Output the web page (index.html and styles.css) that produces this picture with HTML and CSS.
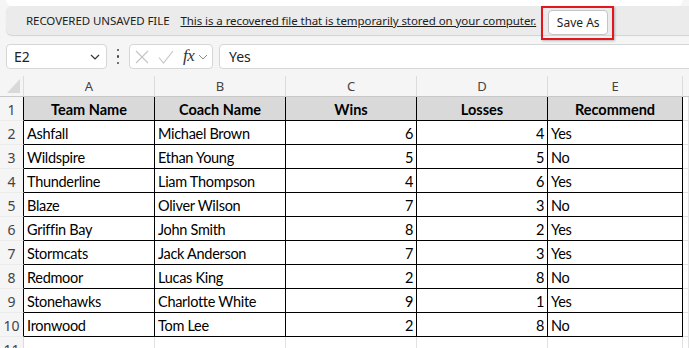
FILE: index.html
```html
<!DOCTYPE html>
<html lang="en">
<head>
<meta charset="utf-8">
<title>Recovered file</title>
<link rel="stylesheet" href="styles.css">
</head>
<body>
<div class="app">
  <div class="top-strip"></div>
  <div class="notice">
    <span class="notice-title">RECOVERED UNSAVED FILE</span>
    <a class="notice-link" href="#">This is a recovered file that is temporarily stored on your computer.</a>
    <span class="highlight"><button class="save-btn">Save As</button></span>
  </div>

  <div class="formula-row">
    <div class="name-box">
      <span>E2</span>
      <svg class="chev" width="10" height="6" viewBox="0 0 10 6"><path d="M1 1 L5 5 L9 1" fill="none" stroke="#333" stroke-width="1.2"/></svg>
    </div>
    <div class="more-dots"><i></i><i></i><i></i></div>
    <div class="fx-group">
      <svg class="ico-x" width="14" height="14" viewBox="0 0 14 14"><path d="M1 1 L13 13 M13 1 L1 13" stroke="#c4c4c4" stroke-width="1.1" fill="none"/></svg>
      <svg class="ico-check" width="16" height="14" viewBox="0 0 16 14"><path d="M1 7.5 L5.5 13 L15 1" stroke="#c4c4c4" stroke-width="1.1" fill="none"/></svg>
      <span class="fx">fx</span>
      <svg class="chev-sm" width="10" height="6" viewBox="0 0 10 6"><path d="M1 1 L5 5 L9 1" fill="none" stroke="#8a8a8a" stroke-width="1"/></svg>
    </div>
    <div class="formula-input">Yes</div>
  </div>

  <div class="sheet">
    <div class="corner"></div>
    <div class="colh">A</div><div class="colh">B</div><div class="colh">C</div><div class="colh">D</div><div class="colh">E</div><div class="colh last"></div>

    <div class="rowh">1</div>
    <div class="cell head">Team Name</div><div class="cell head">Coach Name</div><div class="cell head">Wins</div><div class="cell head">Losses</div><div class="cell head">Recommend</div><div class="blank"></div>

    <div class="rowh">2</div>
    <div class="cell">Ashfall</div><div class="cell">Michael Brown</div><div class="cell num">6</div><div class="cell num">4</div><div class="cell">Yes</div><div class="blank"></div>

    <div class="rowh">3</div>
    <div class="cell">Wildspire</div><div class="cell">Ethan Young</div><div class="cell num">5</div><div class="cell num">5</div><div class="cell">No</div><div class="blank"></div>

    <div class="rowh">4</div>
    <div class="cell">Thunderline</div><div class="cell">Liam Thompson</div><div class="cell num">4</div><div class="cell num">6</div><div class="cell">Yes</div><div class="blank"></div>

    <div class="rowh">5</div>
    <div class="cell">Blaze</div><div class="cell">Oliver Wilson</div><div class="cell num">7</div><div class="cell num">3</div><div class="cell">No</div><div class="blank"></div>

    <div class="rowh">6</div>
    <div class="cell">Griffin Bay</div><div class="cell">John Smith</div><div class="cell num">8</div><div class="cell num">2</div><div class="cell">Yes</div><div class="blank"></div>

    <div class="rowh">7</div>
    <div class="cell">Stormcats</div><div class="cell">Jack Anderson</div><div class="cell num">7</div><div class="cell num">3</div><div class="cell">Yes</div><div class="blank"></div>

    <div class="rowh">8</div>
    <div class="cell">Redmoor</div><div class="cell">Lucas King</div><div class="cell num">2</div><div class="cell num">8</div><div class="cell">No</div><div class="blank"></div>

    <div class="rowh">9</div>
    <div class="cell">Stonehawks</div><div class="cell">Charlotte White</div><div class="cell num">9</div><div class="cell num">1</div><div class="cell">Yes</div><div class="blank"></div>

    <div class="rowh">10</div>
    <div class="cell">Ironwood</div><div class="cell">Tom Lee</div><div class="cell num">2</div><div class="cell num">8</div><div class="cell">No</div><div class="blank"></div>

    <div class="rowh empty">11</div>
    <div class="blank"></div><div class="blank"></div><div class="blank"></div><div class="blank"></div><div class="blank"></div><div class="blank"></div>
  </div>
</div>
</body>
</html>
```

FILE: styles.css
```css
html, body {
  margin: 0;
  padding: 0;
  overflow: hidden;
  background: #f5f5f5;
}
.app {
  width: 689px;
  height: 348px;
  overflow: hidden;
  font-family: "Noto Sans", "Open Sans", sans-serif;
  color: #1f1f1f;
}
.top-strip {
  height: 6px;
  margin: 0 6px;
  background: #ffffff;
  border-radius: 0 0 6px 6px;
}
.notice {
  height: 29px;
  margin-left: 6px;
  margin-right: -12px;
  background: #ebebeb;
  border-radius: 6px 0 0 6px;
  box-shadow: 0 1px 1px rgba(0, 0, 0, 0.14);
  display: flex;
  align-items: center;
  padding-left: 20px;
  font-size: 11.5px;
  letter-spacing: -0.07px;
  box-sizing: border-box;
}
.notice-title {
  color: #1e1e1e;
  margin-right: 11px;
}
.notice-link {
  color: #1e1e1e;
  text-decoration: underline;
  margin-right: 5px;
}
.highlight {
  display: flex;
  border: 2px solid #e4161b;
  padding: 2px 4px 3px 5px;
  margin: 2px 0 -3px;
  box-shadow: 1px 1px 2px rgba(0, 0, 0, 0.25);
}
.save-btn {
  width: 60px;
  height: 25px;
  border: 1px solid #c4c4c4;
  border-radius: 4px;
  background: #ffffff;
  font-family: inherit;
  font-size: 12px;
  color: #1e1e1e;
  padding: 0;
}
.formula-row {
  display: flex;
  align-items: stretch;
  height: 25px;
  margin-top: 9px;
  padding-left: 6px;
  margin-right: -10px;
}
.name-box {
  width: 101px;
  box-sizing: border-box;
  background: #fff;
  border: 1px solid #d6d6d6;
  border-radius: 4px;
  display: flex;
  align-items: center;
  justify-content: space-between;
  padding: 0 6px 0 7px;
  font-size: 14px;
  color: #222;
}
.chev { margin-top: 1px; }
.more-dots {
  width: 22px;
  display: flex;
  flex-direction: column;
  align-items: center;
  justify-content: center;
  gap: 4px;
}
.more-dots i {
  display: block;
  width: 2.5px;
  height: 2.5px;
  border-radius: 1px;
  background: #444;
}
.fx-group {
  width: 84px;
  box-sizing: border-box;
  background: #fff;
  border: 1px solid #d6d6d6;
  border-radius: 4px;
  display: flex;
  align-items: center;
  padding-left: 5px;
}
.ico-x { margin-right: 9px; }
.ico-check { margin-right: 9px; }
.fx {
  font-family: "Liberation Serif", "DejaVu Serif", serif;
  font-style: italic;
  font-size: 17px;
  color: #333;
  margin-right: 4px;
  margin-top: -2px;
  letter-spacing: -0.5px;
}
.chev-sm { margin-top: 1px; }
.formula-input {
  flex: 1;
  margin-left: 6px;
  box-sizing: border-box;
  background: #fff;
  border: 1px solid #d6d6d6;
  border-radius: 4px 0 0 4px;
  display: flex;
  align-items: center;
  padding-left: 9px;
  font-size: 14px;
  color: #222;
}
.sheet {
  margin-top: 7px;
  display: grid;
  grid-template-columns: 24px 131px 131px 131px 131px 135px 1fr;
  grid-template-rows: 21px repeat(11, 24px);
  background: #ffffff;
  font-family: "Lato", "Open Sans", sans-serif;
}
.corner {
  background: #f5f5f5;
  border-right: 1px solid #dcdcdc;
  border-bottom: 1px solid #c8c8c8;
  position: relative;
}
.corner::after {
  content: "";
  position: absolute;
  right: 3px;
  bottom: 3px;
  width: 13px;
  height: 14px;
  background: #d9d9d9;
  clip-path: polygon(100% 0, 100% 100%, 0 100%);
}
.colh {
  background: #f5f5f5;
  border-right: 1px solid #dcdcdc;
  border-bottom: 1px solid #c8c8c8;
  font-family: "Noto Sans", "Open Sans", sans-serif;
  font-size: 13px;
  color: #444;
  display: flex;
  align-items: center;
  justify-content: center;
}
.colh.last { border-right: none; }
.rowh {
  background: #f5f5f5;
  border-right: 1px solid #000;
  border-bottom: 1px solid #ececec;
  font-family: "Noto Sans", "Open Sans", sans-serif;
  font-size: 14px;
  color: #444;
  display: flex;
  align-items: center;
  justify-content: center;
  padding-top: 1px;
  box-sizing: border-box;
}
.rowh.empty { border-right-color: #dcdcdc; }
.cell {
  border-right: 1px solid #000;
  border-bottom: 1px solid #000;
  font-size: 14.5px;
  letter-spacing: -0.3px;
  color: #000;
  padding: 0 3px;
  display: flex;
  align-items: flex-end;
  padding-bottom: 2px;
  white-space: nowrap;
  overflow: hidden;
}
.cell.head {
  background: #d9d9d9;
  font-weight: 700;
  letter-spacing: 0;
  justify-content: center;
}
.cell.num { justify-content: flex-end; }
.blank {
  border-right: 1px solid #e1e1e1;
  border-bottom: 1px solid #e1e1e1;
}
```
